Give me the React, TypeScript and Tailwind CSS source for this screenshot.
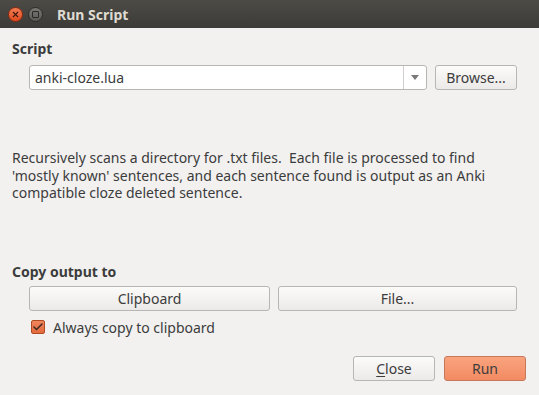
import { Check, X } from "lucide-react";

const font = { fontFamily: "'Noto Sans', 'DejaVu Sans', sans-serif" };

const btn =
  "h-[25px] rounded-[3px] border border-[#b8b6b2] bg-gradient-to-b from-[#fbfbfa] to-[#eceae8] text-[14px] text-[#3c3c3c] flex items-center justify-center";

export default function App() {
  return (
    <div className="w-[539px] h-[395px] bg-[#f2f1f0] flex flex-col overflow-hidden" style={font}>
      {/* title bar */}
      <div className="h-[28px] bg-gradient-to-b from-[#4c4b46] to-[#3c3b37] flex items-center pl-[8px]">
        <div className="w-[15px] h-[15px] rounded-full bg-gradient-to-b from-[#f37a52] to-[#df4a1c] border border-[#8a2c10] flex items-center justify-center">
          <X size={9} strokeWidth={3} className="text-[#3a1a0e]" />
        </div>
        <div className="ml-[5px] w-[15px] h-[15px] rounded-full bg-gradient-to-b from-[#7a7974] to-[#5a5955] border border-[#2e2d2a] flex items-center justify-center">
          <div className="w-[7px] h-[7px] rounded-[1px] border border-[#2a2927]" />
        </div>
        <span className="ml-[14px] text-[14px] font-bold text-[#dfdbd2]">Run Script</span>
      </div>

      <div className="flex flex-col px-[12px]">
        <div className="mt-[12px] text-[14px] font-bold text-[#3c3c3c] leading-[18px]">Script</div>

        <div className="mt-[7px] ml-[17px] flex items-center gap-[8px]">
          <div className="w-[398px] h-[25px] rounded-[3px] border border-[#b8b6b2] bg-white flex items-center">
            <span className="flex-1 pl-[5px] text-[14px] text-[#3c3c3c]">anki-cloze.lua</span>
            <div className="w-[23px] h-full border-l border-[#d2d0cd] flex items-center justify-center">
              <div className="w-0 h-0 border-l-[4px] border-r-[4px] border-t-[5px] border-l-transparent border-r-transparent border-t-[#7a7a7a]" />
            </div>
          </div>
          <div className={btn + " w-[82px]"}>Browse...</div>
        </div>

        <div className="mt-[59px] text-[14px] leading-[17.5px] text-[#3c3c3c] whitespace-pre">
          {"Recursively scans a directory for .txt files.  Each file is processed to find\n'mostly known' sentences, and each sentence found is output as an Anki\ncompatible cloze deleted sentence."}
        </div>

        <div className="mt-[61px] text-[14px] font-bold text-[#3c3c3c] leading-[18px]">Copy output to</div>

        <div className="mt-[5px] ml-[17px] flex gap-[8px]">
          <div className={btn + " w-[241px]"}>Clipboard</div>
          <div className={btn + " w-[239px]"}>File...</div>
        </div>

        <div className="mt-[6px] ml-[19px] flex items-center gap-[8px]">
          <div className="w-[14px] h-[14px] rounded-[2px] bg-gradient-to-b from-[#f0855c] to-[#e4693c] border border-[#b04a22] flex items-center justify-center">
            <Check size={12} strokeWidth={3} className="text-[#3a2a22]" />
          </div>
          <span className="text-[14px] text-[#3c3c3c]">Always copy to clipboard</span>
        </div>

        <div className="mt-[18px] flex justify-end gap-[9px] pr-[1px]">
          <div className={btn + " w-[82px]"}>
            <span className="underline underline-offset-2">C</span>lose
          </div>
          <div className="w-[82px] h-[25px] rounded-[3px] border border-[#c8785a] bg-gradient-to-b from-[#f9a47e] to-[#f28a62] text-[14px] text-[#3c3c3c] flex items-center justify-center">
            Run
          </div>
        </div>
      </div>
    </div>
  );
}
